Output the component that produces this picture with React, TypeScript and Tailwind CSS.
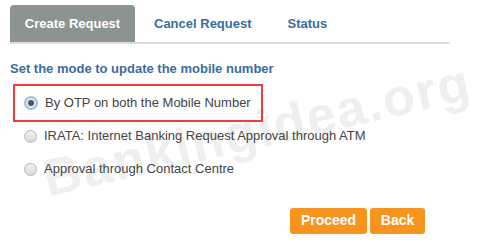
import type React from "react"

const options = [
  "By OTP on both the Mobile Number",
  "IRATA: Internet Banking Request Approval through ATM",
  "Approval through Contact Centre",
]

export default function App() {
  return (
    <div
      className="relative w-[494px] h-[245px] bg-white overflow-hidden"
      style={{ fontFamily: '"Liberation Sans", Arial, sans-serif' } as React.CSSProperties}
    >
      {/* watermark */}
      <div className="absolute left-[44px] top-[140px] -rotate-[13deg] origin-left text-[52px] font-bold text-[#efefef] tracking-[2px] select-none pointer-events-none whitespace-nowrap">
        Bankingidea.org
      </div>

      <div className="relative pt-[5px] pl-[10px] w-[450px]">
        <div className="flex items-end h-[39px] border-b-2 border-[#dedede]">
          <div className="h-full w-[125px] flex items-center justify-center bg-[#8b9490] rounded-t-[4px] text-white font-bold text-[13px]">
            Create Request
          </div>
          <div className="h-full flex items-center pl-[19px] text-[#3a6d9c] font-bold text-[13px]">
            Cancel Request
          </div>
          <div className="h-full flex items-center pl-[36px] text-[#3a6d9c] font-bold text-[13px]">
            Status
          </div>
        </div>
      </div>

      <div className="relative pl-[10px] pt-[15px] text-[13px] font-bold text-[#3a6d9c]">
        Set the mode to update the mobile number
      </div>

      <div className="relative pl-[13px] pt-[5px]">
        {options.map((label, i) => (
          <div
            key={label}
            className={
              i === 0
                ? "flex items-center w-[250px] h-[38px] border-2 border-[#f03c3c] pl-[9px]"
                : i === 1
                  ? "flex items-center h-[33px] pl-[11px] -mt-[2px]"
                  : "flex items-center h-[33px] pl-[11px]"
            }
          >
            {i === 0 ? (
              <span className="w-[14px] h-[14px] rounded-full border-[2px] border-[#9cc3f0] bg-[#e8e8e8] flex items-center justify-center">
                <span className="w-[6px] h-[6px] rounded-full bg-[#555]" />
              </span>
            ) : (
              <span className="w-[13px] h-[13px] rounded-full border border-[#b5b5b5] bg-gradient-to-b from-[#f2f2f2] to-[#d8d8d8]" />
            )}
            <span className="ml-[7px] text-[13px] text-[#444]">{label}</span>
          </div>
        ))}
      </div>

      <div className="relative flex gap-[3px] pl-[290px] pt-[22px]">
        <button className="w-[77px] h-[26px] bg-[#f7941d] rounded-[3px] text-white font-bold text-[14px]">
          Proceed
        </button>
        <button className="w-[55px] h-[26px] bg-[#f7941d] rounded-[3px] text-white font-bold text-[14px]">
          Back
        </button>
      </div>
    </div>
  )
}
